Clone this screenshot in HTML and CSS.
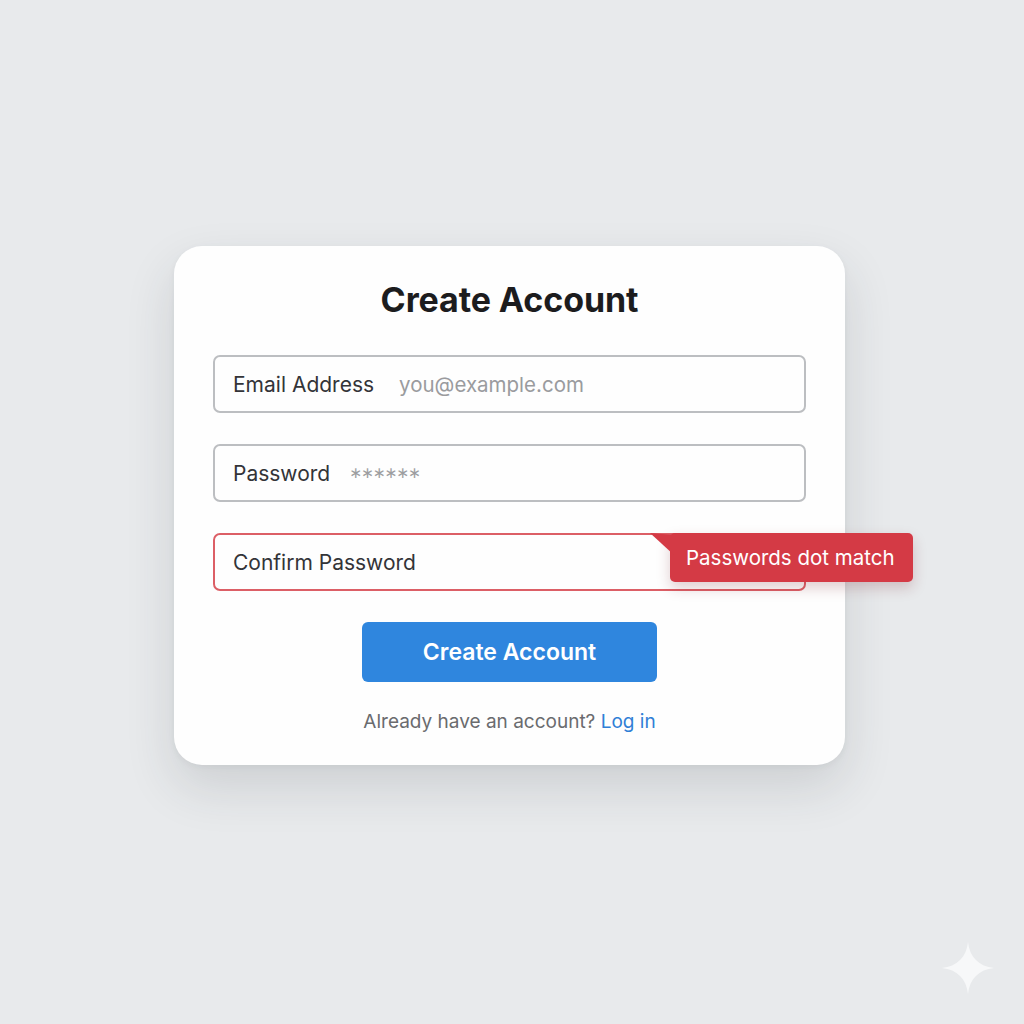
FILE: index.html
```html
<!DOCTYPE html>
<html lang="en">
<head>
<meta charset="utf-8">
<title>Create Account</title>
<link rel="stylesheet" href="styles.css">
</head>
<body>
<main class="stage">
  <section class="card">
    <h1 class="title">Create Account</h1>
    <form class="form">
      <div class="field">
        <span class="label">Email Address</span>
        <span class="placeholder">you@example.com</span>
      </div>
      <div class="field">
        <span class="label">Password</span>
        <span class="stars">∗∗∗∗∗∗</span>
      </div>
      <div class="field field-error">
        <span class="label">Confirm Password</span>
        <div class="tooltip">
          <svg class="tip-arrow" width="24" height="24" viewBox="0 0 24 24"><path d="M0 0 L24 2 L24 22 Z" fill="#d43a45"/></svg>
          Passwords dot match
        </div>
      </div>
      <button type="button" class="btn">Create Account</button>
    </form>
    <p class="footer">Already have an account? <a class="link" href="#">Log in</a></p>
  </section>
  <svg class="sparkle" width="52" height="52" viewBox="0 0 52 52"><path d="M26 0 C27.5 15 37 24.5 52 26 C37 27.5 27.5 37 26 52 C24.5 37 15 27.5 0 26 C15 24.5 24.5 15 26 0 Z" fill="#f7f8f9"/></svg>
</main>
</body>
</html>
```
FILE: styles.css
```css
* { box-sizing: border-box; }
html, body { margin: 0; padding: 0; }
body {
  background: #e8eaec;
  font-family: Inter, "Liberation Sans", Arial, sans-serif;
  width: 1024px;
  height: 1024px;
  overflow: hidden;
}
.stage {
  position: relative;
  width: 1024px;
  height: 1024px;
  padding-top: 246px;
  padding-left: 174px;
}
.card {
  width: 671px;
  background: #fefefe;
  border-radius: 28px;
  padding: 34px 39px 31px;
  box-shadow: 0 22px 50px rgba(40, 50, 60, 0.14), 0 2px 6px rgba(40, 50, 60, 0.05);
  display: flex;
  flex-direction: column;
  align-items: center;
}
.title {
  margin: 0 0 35px;
  font-size: 34px;
  line-height: 40px;
  font-weight: 700;
  color: #1c1c1e;
  letter-spacing: -0.1px;
}
.form {
  width: 100%;
  display: flex;
  flex-direction: column;
  align-items: center;
  gap: 31px;
}
.field {
  position: relative;
  width: 100%;
  height: 58px;
  border: 2px solid #bcbec1;
  border-radius: 7px;
  display: flex;
  align-items: center;
  gap: 25px;
  padding-left: 18px;
  font-size: 21px;
}
.field-error { border-color: #dc5f66; }
.label { color: #333438; }
.placeholder { color: #9a9b9e; font-size: 20.5px; }
.stars {
  color: #9c9da0;
  font-family: "DejaVu Sans", sans-serif;
  font-size: 15.5px;
  letter-spacing: -1.2px;
  margin-left: -6px;
}
.btn {
  width: 295px;
  height: 60px;
  border: none;
  border-radius: 6px;
  background: #2f86de;
  color: #fff;
  font-family: inherit;
  font-size: 23px;
  font-weight: 600;
}
.footer {
  margin: 28px 0 0;
  font-size: 19px;
  line-height: 24px;
  color: #6a6b6e;
}
.link { color: #2f7fd6; text-decoration: none; }
.tooltip {
  position: absolute;
  left: 455px;
  top: -2px;
  width: 243px;
  height: 49px;
  background: #d43a45;
  color: #fff;
  border-radius: 5px;
  font-size: 20.5px;
  display: flex;
  align-items: center;
  padding-left: 16px;
  box-shadow: 0 6px 14px rgba(120, 30, 40, 0.22);
}
.tip-arrow {
  position: absolute;
  left: -20px;
  top: 0;
}
.sparkle {
  position: absolute;
  left: 942px;
  top: 942px;
}
```
